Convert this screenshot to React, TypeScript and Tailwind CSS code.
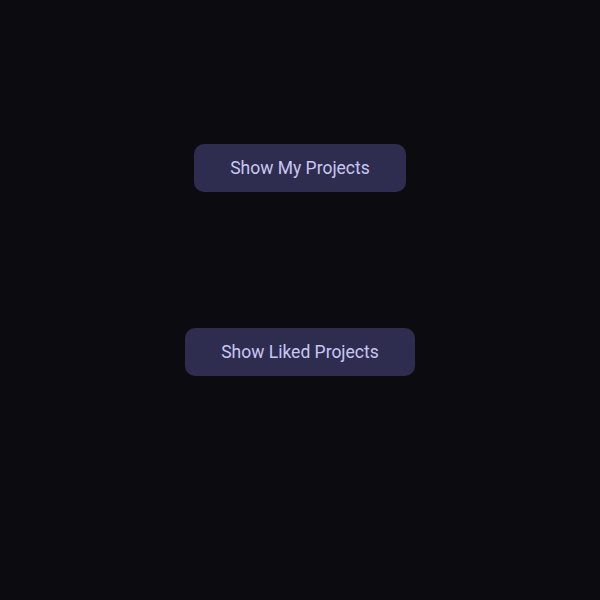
export default function App() {
  return (
    <div className="min-h-screen bg-[#0b0b10] flex flex-col items-center pt-[144px] gap-[136px] font-['Roboto',sans-serif]">
      <button className="h-[48px] px-[36px] rounded-[10px] bg-[#2e2d4f] text-[#c9c7f2] text-[17.5px]">
        Show My Projects
      </button>
      <button className="h-[48px] px-[36px] rounded-[10px] bg-[#2e2d4f] text-[#c9c7f2] text-[17.5px]">
        Show Liked Projects
      </button>
    </div>
  );
}
